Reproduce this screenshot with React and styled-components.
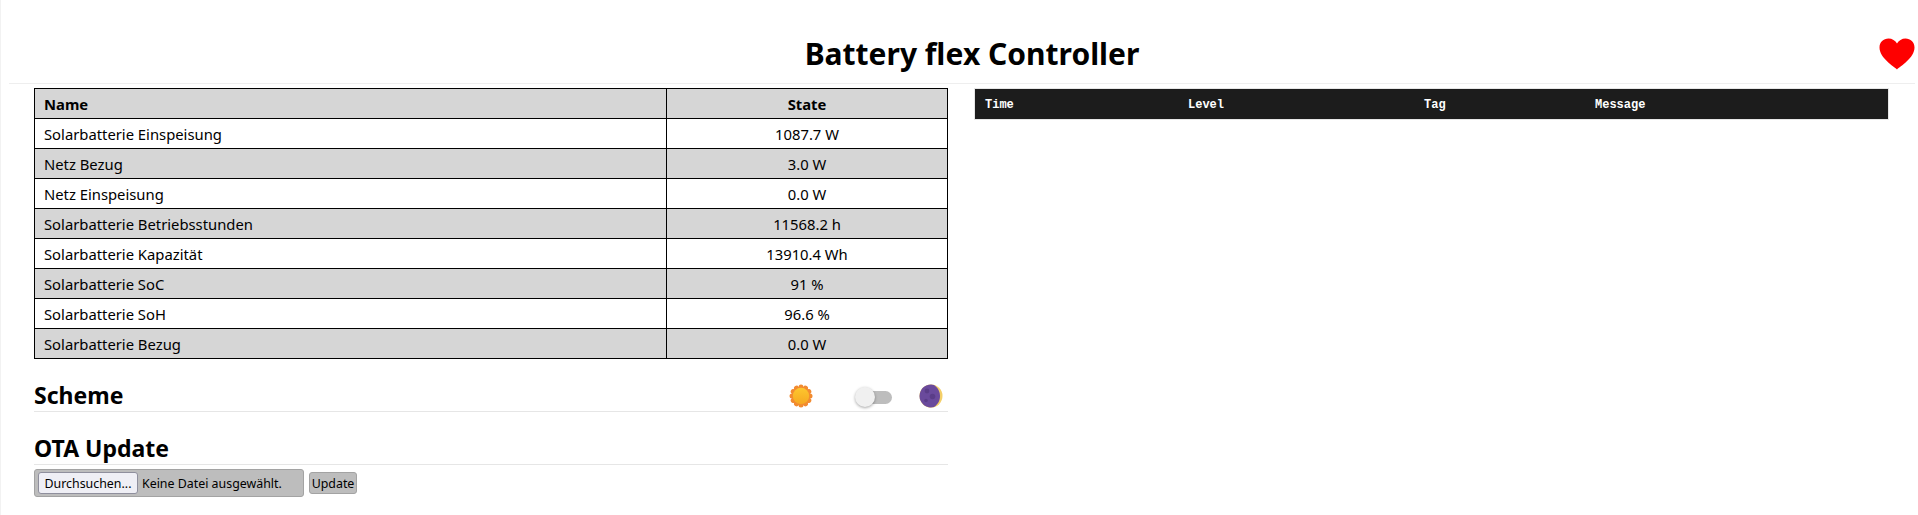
import React from "react";
import styled, { createGlobalStyle } from "styled-components";

const GlobalStyle = createGlobalStyle`
  html, body {
    margin: 0;
    padding: 0;
    background: #fff;
    color: #000;
    font-family: "Noto Sans", "Open Sans", sans-serif;
  }
`;

const rows = [
  ["Solarbatterie Einspeisung", "1087.7 W"],
  ["Netz Bezug", "3.0 W"],
  ["Netz Einspeisung", "0.0 W"],
  ["Solarbatterie Betriebsstunden", "11568.2 h"],
  ["Solarbatterie Kapazität", "13910.4 Wh"],
  ["Solarbatterie SoC", "91 %"],
  ["Solarbatterie SoH", "96.6 %"],
  ["Solarbatterie Bezug", "0.0 W"],
];

const App = () => {
  return (
    <Page>
      <GlobalStyle />
      <Header>
        <Title>Battery flex Controller</Title>
        <Heart viewBox="0 0 36 32">
          <path
            d="M18 31.5C15 28.5 0.5 20 0.5 9.5C0.5 4 4.5 0.5 9.5 0.5C13 0.5 16.5 2.5 18 5.5C19.5 2.5 23 0.5 26.5 0.5C31.5 0.5 35.5 4 35.5 9.5C35.5 20 21 28.5 18 31.5Z"
            fill="#fe0000"
          />
        </Heart>
      </Header>
      <Columns>
        <LeftColumn>
          <StateTable>
            <thead>
              <Row $shaded>
                <NameHead>Name</NameHead>
                <StateHead>State</StateHead>
              </Row>
            </thead>
            <tbody>
              {rows.map(([name, state], i) => (
                <Row key={name} $shaded={i % 2 === 1}>
                  <NameCell>{name}</NameCell>
                  <StateCell>{state}</StateCell>
                </Row>
              ))}
            </tbody>
          </StateTable>

          <SchemeHeading>
            <span>Scheme</span>
            <SchemeControls>
              <SunIcon />
              <Toggle>
                <Knob />
              </Toggle>
              <MoonIcon />
            </SchemeControls>
          </SchemeHeading>

          <OtaHeading>OTA Update</OtaHeading>
          <UpdateForm>
            <FileBox>
              <BrowseButton type="button">Durchsuchen...</BrowseButton>
              <FileName>Keine Datei ausgewählt.</FileName>
            </FileBox>
            <UpdateButton type="button">Update</UpdateButton>
          </UpdateForm>
        </LeftColumn>

        <LogColumn>
          <LogHeader>
            <TimeCol>Time</TimeCol>
            <LevelCol>Level</LevelCol>
            <TagCol>Tag</TagCol>
            <span>Message</span>
          </LogHeader>
        </LogColumn>
      </Columns>
    </Page>
  );
};

const SunIcon = () => {
  const bumps = Array.from({ length: 12 }, (_, i) => (i * 360) / 12);
  return (
    <SchemeIcon viewBox="0 0 24 24">
      <defs>
        <linearGradient id="sunFill" x1="0" y1="0" x2="0" y2="1">
          <stop offset="0" stopColor="#fdc72e" />
          <stop offset="1" stopColor="#f6a821" />
        </linearGradient>
      </defs>
      {bumps.map((deg) => (
        <circle key={deg} cx="12" cy="3" r="2.5" fill="#f28b30" transform={`rotate(${deg} 12 12)`} />
      ))}
      <circle cx="12" cy="12" r="9.6" fill="#f28b30" />
      <circle cx="12" cy="12" r="8.2" fill="url(#sunFill)" />
    </SchemeIcon>
  );
};

const MoonIcon = () => (
  <SchemeIcon viewBox="0 0 24 24">
    <circle cx="12" cy="12" r="11.5" fill="#f4cf68" />
    <path d="M15 .9A11.5 11.5 0 1 0 15 23.100C19.500 20 21 16 21 12S19.500 4 15 .9Z" fill="#6a4a9c" />
    <circle cx="8" cy="7" r="2.4" fill="#5a3d88" />
    <circle cx="13.500" cy="12.500" r="2.800" fill="#5a3d88" />
    <circle cx="7" cy="16.500" r="1.800" fill="#5a3d88" />
  </SchemeIcon>
);

export default App;

// Styled Components
const Page = styled.div`
  box-sizing: border-box;
  width: 1918px;
  height: 515px;
  overflow: hidden;
  border-left: 1px solid #f2f2f2;
  padding: 0 3px 0 8px;
`;

const Header = styled.header`
  position: relative;
  height: 84px;
  box-sizing: border-box;
  border-bottom: 1px solid #eeeeee;
  display: flex;
  align-items: flex-end;
  justify-content: center;
  padding-left: 20px;
`;

const Title = styled.h1`
  margin: 0 0 7px;
  font-size: 30px;
  line-height: 44px;
  font-weight: 700;
`;

const Heart = styled.svg`
  position: absolute;
  right: 0;
  top: 38px;
  width: 36px;
  height: 32px;
`;

const Columns = styled.div`
  display: flex;
  padding: 4px 26px 0 25px;
  gap: 26px;
`;

const LeftColumn = styled.div`
  width: 914px;
  flex: none;
`;

const LogColumn = styled.div`
  flex: 1;
`;

const StateTable = styled.table`
  width: 100%;
  border-collapse: collapse;
  table-layout: fixed;
  border: 1px solid #000;
  font-size: 14.8px;
`;

const Row = styled.tr`
  height: 30px;
  background: ${(p) => (p.$shaded ? "#d6d6d6" : "#ffffff")};
`;

const NameCell = styled.td`
  border: 1px solid #000;
  padding: 0 9px;
  width: 632px;
  line-height: 20px;
  box-sizing: border-box;
`;

const StateCell = styled.td`
  border: 1px solid #000;
  padding: 0 9px;
  text-align: center;
  line-height: 20px;
`;

const NameHead = styled(NameCell).attrs({ as: "th" })`
  text-align: left;
  font-weight: 700;
`;

const StateHead = styled(StateCell).attrs({ as: "th" })`
  font-weight: 700;
`;

const Heading = styled.h2`
  margin: 0;
  height: 31px;
  padding-top: 5px;
  font-size: 23px;
  line-height: 31px;
  font-weight: 700;
  border-bottom: 1px solid #e6e6e6;
  display: flex;
  align-items: center;
  justify-content: space-between;
`;

const SchemeHeading = styled(Heading)`
  margin-top: 16px;
`;

const OtaHeading = styled(Heading)`
  margin-top: 16px;
`;

const SchemeControls = styled.div`
  display: flex;
  align-items: center;
  margin-right: 5px;
`;

const SchemeIcon = styled.svg`
  width: 24px;
  height: 24px;
  display: block;
`;

const Toggle = styled.div`
  position: relative;
  width: 36px;
  height: 13px;
  border-radius: 7px;
  background: #bdbdbd;
  margin: 3px 27px 0 43px;
`;

const Knob = styled.div`
  position: absolute;
  left: -1px;
  top: -4px;
  width: 20px;
  height: 20px;
  border-radius: 50%;
  background: #f0f0f0;
  box-shadow: 0 1px 3px rgba(0, 0, 0, 0.35);
`;

const UpdateForm = styled.div`
  display: flex;
  align-items: center;
  gap: 5px;
  margin-top: 4px;
`;

const FileBox = styled.div`
  box-sizing: border-box;
  width: 270px;
  height: 28px;
  display: flex;
  align-items: center;
  gap: 4px;
  padding: 0 3px;
  background: #bdbdbd;
  border: 1px solid #a3a3a3;
  border-radius: 3px;
  font-size: 12.4px;
`;

const BrowseButton = styled.button`
  box-sizing: border-box;
  height: 22px;
  width: 100px;
  padding: 0;
  background: #efeff5;
  border: 1px solid #8f8f9d;
  border-radius: 3px;
  font: 12.4px "Noto Sans", sans-serif;
  color: #000;
`;

const FileName = styled.span`
  white-space: nowrap;
`;

const UpdateButton = styled.button`
  box-sizing: border-box;
  height: 22px;
  width: 48px;
  padding: 0;
  background: #bdbdbd;
  border: 1px solid #a3a3a3;
  border-radius: 3px;
  font: 12.4px "Noto Sans", sans-serif;
  color: #000;
`;

const LogHeader = styled.div`
  box-sizing: border-box;
  height: 32px;
  display: flex;
  align-items: center;
  padding: 1px 10px 0;
  background: #1c1c1c;
  border: 1px solid #e6e6e6;
  color: #fff;
  font: 700 12px "Liberation Mono", monospace;
`;

const TimeCol = styled.span`
  width: 203px;
`;

const LevelCol = styled.span`
  width: 236px;
`;

const TagCol = styled.span`
  width: 171px;
`;
